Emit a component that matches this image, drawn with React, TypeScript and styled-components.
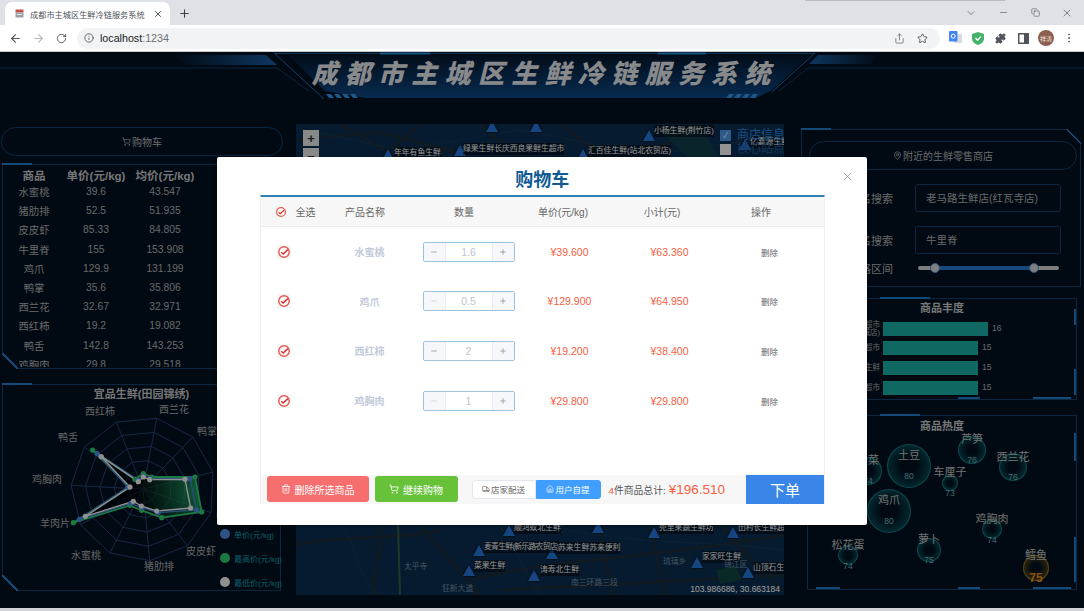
import React from "react";
import styled, { createGlobalStyle } from "styled-components";
import { ArrowLeft, ArrowRight, RotateCw, Info, Share, Star, Puzzle, MoreVertical, ChevronDown, Minus, Copy, X, Plus, Trash2, ShoppingCart, Truck, Home, MapPin } from "lucide-react";

const SANS = `"Liberation Sans", "Noto Sans CJK SC", sans-serif`;
const PAGE = "#02101f";
const LINE = "#0f4068";
const ACCENT = "#1f78c4";

const Global = createGlobalStyle`
  html, body { margin: 0; padding: 0; background: #cfd2d6; }
  body { font-family: ${SANS}; overflow: hidden; }
  * { box-sizing: border-box; }
`;

const Shell = styled.div`
  width: 1084px;
  height: 611px;
  display: flex;
  flex-direction: column;
  overflow: hidden;
`;

/* ---------- browser chrome ---------- */
const TabBar = styled.div`
  height: 25px;
  background: #dee1e6;
  display: flex;
  align-items: flex-end;
  padding-left: 5px;
  color: #45494e;
  position: relative;
`;
const TabShade = styled.div`
  position: absolute;
  top: 0;
  left: 805px;
  width: 200px;
  height: 1px;
  background: #b9bbbe;
`;
const Tab = styled.div`
  width: 165px;
  height: 23px;
  background: #fff;
  border-radius: 7px 7px 0 0;
  display: flex;
  align-items: center;
  padding: 0 7px 0 10px;
  font-size: 8.2px;
  color: #50545a;
`;
const TabTitle = styled.span`
  margin-left: 6px;
  flex: 1;
  white-space: nowrap;
`;
const NewTab = styled.div`
  width: 28px;
  height: 23px;
  margin-left: 0;
  display: flex;
  align-items: center;
  justify-content: center;
  color: #3c4043;
`;
const WindowControls = styled.div`
  margin-left: auto;
  height: 25px;
  display: flex;
  align-items: center;
  padding-right: 1px;
`;
const WindowButton = styled.div`
  width: 32px;
  display: flex;
  justify-content: center;
  color: #45494e;
`;
const Toolbar = styled.div`
  height: 27px;
  background: #fff;
  border-bottom: 1px solid #c8cacd;
  display: flex;
  align-items: center;
  padding-left: 4px;
`;
const NavButton = styled.div<{ $off?: boolean }>`
  width: 23px;
  display: flex;
  justify-content: center;
  color: ${(p) => (p.$off ? "#b4b7bb" : "#50545a")};
`;
const Omnibox = styled.div`
  margin-left: 4px;
  width: 863px;
  height: 21px;
  border-radius: 11px;
  background: #f1f3f4;
  display: flex;
  align-items: center;
  padding: 0 6px 0 7px;
  color: #50545a;
`;
const Url = styled.span`
  margin-left: 6px;
  font-size: 10.7px;
  color: #202124;
  flex: 1;
  span { color: #6b6f74; }
`;
const OmniIcon = styled.div`
  width: 23px;
  display: flex;
  justify-content: center;
`;
const Extensions = styled.div`
  display: flex;
  align-items: center;
  margin-left: 4px;
`;
const ExtSlot = styled.div`
  width: 22.7px;
  display: flex;
  justify-content: center;
  align-items: center;
  color: #50545a;
`;
const Avatar = styled.div`
  width: 16px;
  height: 16px;
  border-radius: 50%;
  background: #8d5f4e;
  color: #f3e8e0;
  font-size: 6px;
  display: flex;
  align-items: center;
  justify-content: center;
  white-space: nowrap;
`;

/* ---------- stage ---------- */
const Stage = styled.div`
  position: relative;
  height: 556px;
  background: ${PAGE};
  flex: none;
`;
const Header = styled.header`
  position: relative;
  height: 72px;
`;
const Banner = styled.svg`
  display: block;
`;
const SystemTitle = styled.h1`
  position: absolute;
  left: 0;
  right: 0;
  top: 4px;
  margin: 0;
  text-align: center;
  font-family: "Noto Sans CJK SC", sans-serif;
  font-size: 26px;
  line-height: 32px;
  font-weight: 900;
  font-style: italic;
  letter-spacing: 7.3px;
  color: #dcdee0;
  padding-left: 5px;
`;
const Columns = styled.div`
  display: grid;
  grid-template-columns: 283px 1fr 283px;
  height: 484px;
`;
const Side = styled.div<{ $top: number }>`
  display: flex;
  flex-direction: column;
  padding-top: ${(p) => p.$top}px;
`;
const Panel = styled.section<{ $h: number; $w: number; $corner?: "bl" | "tr"; $ml?: number; $mt?: number; $pt?: number; $ax?: number; $aw?: number; $foot?: boolean }>`
  position: relative;
  flex: none;
  width: ${(p) => p.$w}px;
  height: ${(p) => p.$h}px;
  margin-left: ${(p) => p.$ml ?? 0}px;
  margin-top: ${(p) => p.$mt ?? 0}px;
  padding-top: ${(p) => p.$pt ?? 0}px;
  border: 1px solid ${LINE};
  color: #bbb;
  ${(p) =>
    p.$foot
      ? `background:
      linear-gradient(90deg, transparent 3%, ${ACCENT} 3%, ${ACCENT} 12%, transparent 12%, transparent 56%, ${ACCENT} 56%, ${ACCENT} 64%, transparent 64%, transparent 84%, ${ACCENT} 84%, ${ACCENT} 98%, transparent 98%) bottom / 100% 2px no-repeat,
      linear-gradient(180deg, transparent 10%, ${ACCENT} 10%, ${ACCENT} 26%, transparent 26%, transparent 70%, ${ACCENT} 70%, ${ACCENT} 96%, transparent 96%) right / 2px 100% no-repeat;`
      : ""}
  &::before {
    content: "";
    position: absolute;
    left: ${(p) => p.$ax ?? -1}px;
    top: -2px;
    width: ${(p) => p.$aw ?? 30}px;
    height: 2px;
    background: ${ACCENT};
  }
  &::after {
    content: "";
    position: absolute;
    width: 16px;
    height: 16px;
    ${(p) =>
      p.$corner === "tr"
        ? `right: -1px; top: -1px; background: linear-gradient(45deg, transparent 50%, ${ACCENT} 50%, ${ACCENT} 58%, ${PAGE} 58%);`
        : p.$corner === "bl"
        ? `left: -1px; bottom: -1px; background: linear-gradient(45deg, ${PAGE} 46%, ${ACCENT} 46%, ${ACCENT} 54%, transparent 54%);`
        : ""}
  }
`;
const Pill = styled.div<{ $w: number; $ml: number }>`
  width: ${(p) => p.$w}px;
  height: 29px;
  margin-left: ${(p) => p.$ml}px;
  flex: none;
  border: 1px solid ${LINE};
  border-radius: 15px;
  display: flex;
  align-items: center;
  justify-content: center;
  gap: 1px;
  font-size: 10px;
  color: #b0b0b0;
`;
const TableClip = styled.div`
  height: 202px;
  overflow: hidden;
`;
const DataRow = styled.div<{ $head?: boolean }>`
  display: grid;
  grid-template-columns: 62px 62px 76px 90px;
  height: ${(p) => (p.$head ? 15 : 19.2)}px;
  align-items: center;
  text-align: center;
  white-space: nowrap;
  font-size: ${(p) => (p.$head ? 11.5 : 10.3)}px;
  font-weight: ${(p) => (p.$head ? 700 : 400)};
  margin-top: ${(p) => (p.$head ? 2 : 0)}px;
  color: ${(p) => (p.$head ? "#c0c0c0" : "#aaa")};
`;
const RadarTitle = styled.div`
  height: 19px;
  line-height: 19px;
  font-size: 11px;
  text-align: center;
  font-weight: 700;
  color: #bdbdbd;
`;
const Legend = styled.ul`
  position: absolute;
  right: 2px;
  bottom: 1px;
  margin: 0;
  padding: 0;
  list-style: none;
  display: flex;
  flex-direction: column;
  gap: 10px;
  width: 58px;
`;
const LegendItem = styled.li`
  display: flex;
  align-items: center;
  gap: 4px;
  height: 14px;
  font-size: 8px;
  color: #149aa6;
  white-space: nowrap;
`;
const LegendDot = styled.i<{ $c: string }>`
  width: 10px;
  height: 10px;
  border-radius: 50%;
  background: ${(p) => p.$c};
  flex: none;
`;

/* ---------- map ---------- */
const MapBox = styled.div`
  position: relative;
  margin: 0 17px 0 13px;
  height: 471px;
  background: #0b2c4c;
  overflow: hidden;
`;
const MapArt = styled.svg`
  display: block;
`;
const ZoomStack = styled.div`
  position: absolute;
  left: 7px;
  top: 6px;
  display: flex;
  flex-direction: column;
  gap: 2px;
`;
const ZoomBtn = styled.div`
  width: 16px;
  height: 16px;
  background: #ddd;
  color: #333;
  font-size: 13px;
  font-weight: 700;
  display: flex;
  align-items: center;
  justify-content: center;
`;
const Pin = styled.div<{ $x: number; $y: number }>`
  position: absolute;
  left: ${(p) => p.$x - 6}px;
  top: ${(p) => p.$y - 6}px;
  width: 0;
  height: 0;
  border-left: 6px solid transparent;
  border-right: 6px solid transparent;
  border-bottom: 11px solid #2272d0;
  filter: drop-shadow(0 0 1px #000);
`;
const MapText = styled.div<{ $x: number; $y: number; $kind?: string }>`
  position: absolute;
  left: ${(p) => p.$x}px;
  top: ${(p) => p.$y - 6}px;
  font-size: 7.8px;
  line-height: 12px;
  white-space: nowrap;
  letter-spacing: ${(p) => (p.$kind === "tight" ? "-0.7px" : "0")};
  color: ${(p) => (p.$kind === "faint" ? "#6f8aa3" : "#eee")};
  background: ${(p) => (p.$kind === "faint" ? "transparent" : "rgba(0,0,0,.45)")};
`;
const LayerSwitch = styled.div<{ $y: number; $on?: boolean }>`
  position: absolute;
  left: 424px;
  top: ${(p) => p.$y}px;
  display: flex;
  align-items: center;
  gap: 6px;
  font-size: 12px;
  line-height: 11px;
  white-space: nowrap;
  color: ${(p) => (p.$on ? "#2a7fd0" : "#1f5c96")};
  i {
    width: 11px;
    height: 11px;
    display: flex;
    align-items: center;
    justify-content: center;
    background: ${(p) => (p.$on ? "#4a90e2" : "#eee")};
    color: #dfe;
    font-size: 8px;
    font-style: normal;
  }
`;
const Coord = styled.div`
  position: absolute;
  right: 4px;
  bottom: 0;
  font-size: 8.5px;
  line-height: 12px;
  color: #fff;
`;

/* ---------- right column ---------- */
const FormRow = styled.div<{ $mt: number }>`
  display: grid;
  grid-template-columns: 84px 146px;
  column-gap: 22px;
  margin: ${(p) => p.$mt}px 0 0 7px;
  align-items: center;
  font-size: 11px;
  color: #aaa;
  text-align: right;
`;
const SearchBox = styled.div`
  height: 28px;
  border: 1px solid ${LINE};
  border-radius: 3px;
  line-height: 26px;
  padding-left: 10px;
  text-align: left;
  white-space: nowrap;
  font-size: 10.5px;
`;
const SliderTrack = styled.div`
  position: relative;
  height: 4px;
  width: 141px;
  margin-left: 3px;
  border-radius: 2px;
  background: #ccc;
`;
const SliderRange = styled.div`
  position: absolute;
  left: 17px;
  right: 25px;
  top: 0;
  bottom: 0;
  background: #2a74c8;
`;
const SliderKnob = styled.i<{ $x: number }>`
  position: absolute;
  left: ${(p) => p.$x - 5}px;
  top: -3px;
  width: 10px;
  height: 10px;
  border-radius: 50%;
  background: #ccc;
  border: 1px solid #4a87cc;
`;
const PanelHeading = styled.div<{ $h: number; $mb?: number }>`
  height: ${(p) => p.$h}px;
  line-height: ${(p) => p.$h}px;
  margin-bottom: ${(p) => p.$mb ?? 0}px;
  font-size: 11px;
  font-weight: 700;
  text-align: center;
  color: #c0c0c0;
`;
const BarRows = styled.div`
  display: flex;
  flex-direction: column;
  gap: 6px;
`;
const BarRow = styled.div`
  display: grid;
  grid-template-columns: 72px auto;
  column-gap: 3px;
  align-items: center;
  justify-content: start;
  height: 14px;
`;
const BarLabel = styled.div`
  font-size: 7.5px;
  line-height: 8px;
  text-align: right;
  color: #a5a5a5;
  white-space: pre-line;
`;
const Bar = styled.div<{ $w: number }>`
  width: ${(p) => p.$w}px;
  height: 14px;
  background: #1ba89e;
  position: relative;
  &::after {
    content: attr(data-v);
    position: absolute;
    left: calc(100% + 4px);
    top: 1px;
    font-size: 8.5px;
    color: #aaa;
  }
`;
const BubbleCanvas = styled.div`
  position: relative;
  height: 153px;
`;
const Bubble = styled.div<{ $x: number; $y: number; $r: number; $gold?: boolean }>`
  position: absolute;
  left: ${(p) => p.$x - p.$r}px;
  top: ${(p) => p.$y - p.$r}px;
  width: ${(p) => p.$r * 2}px;
  height: ${(p) => p.$r * 2}px;
  border-radius: 50%;
  background: radial-gradient(circle, transparent 25%, ${(p) => (p.$gold ? "rgba(200,140,20,.55)" : "rgba(20,170,170,.5)")} 100%);
  border: 1px solid ${(p) => (p.$gold ? "rgba(220,160,30,.5)" : "rgba(30,190,190,.45)")};
`;
const BubbleName = styled.div<{ $x: number; $y: number }>`
  position: absolute;
  left: ${(p) => p.$x}px;
  top: ${(p) => p.$y - 7}px;
  transform: translateX(-50%);
  font-size: 11px;
  line-height: 14px;
  color: #b8b8b8;
  white-space: nowrap;
`;
const BubbleValue = styled.div<{ $x: number; $y: number; $gold?: boolean }>`
  position: absolute;
  left: ${(p) => p.$x}px;
  top: ${(p) => p.$y - 6}px;
  transform: translateX(-50%);
  font-size: ${(p) => (p.$gold ? 12 : 8.5)}px;
  font-weight: ${(p) => (p.$gold ? 700 : 400)};
  line-height: 12px;
  color: ${(p) => (p.$gold ? "#e08a10" : "#6fb0b8")};
`;

/* ---------- modal ---------- */
const Mask = styled.div`
  position: absolute;
  inset: 0;
  background: rgba(0, 0, 0, 0.38);
`;
const Modal = styled.div`
  position: absolute;
  left: 217px;
  top: 105px;
  width: 650px;
  height: 368px;
  background: #fff;
  border-radius: 2px;
  box-shadow: 0 1px 3px rgba(0, 0, 0, 0.3);
  padding: 0 42px 21px 42.5px;
  display: flex;
  flex-direction: column;
`;
const ModalTitle = styled.h2`
  margin: 0;
  height: 38px;
  line-height: 46px;
  font-size: 18px;
  font-weight: 700;
  color: #0f5a94;
  text-align: center;
`;
const CloseBtn = styled.div`
  position: absolute;
  right: 13px;
  top: 13px;
  color: #8f959c;
  display: flex;
`;
const Cart = styled.div`
  flex: 1;
  display: flex;
  flex-direction: column;
  border-top: 2px solid #3080b8;
  border-left: 1px solid #eee;
  border-right: 1px solid #eee;
`;
const CartHead = styled.div`
  height: 30px;
  flex: none;
  background: #f7f7f7;
  border-bottom: 1px solid #ececec;
  display: grid;
  grid-template-columns: 55px repeat(5, 99px);
  align-items: center;
  text-align: center;
  font-size: 10px;
  color: #666;
`;
const SelectAll = styled.div`
  display: flex;
  align-items: center;
  padding-left: 14px;
  gap: 9px;
  white-space: nowrap;
`;
const CartRows = styled.div`
  flex: 1;
`;
const CartRow = styled.div`
  height: 49.6px;
  display: grid;
  grid-template-columns: 59px repeat(5, 100px);
  align-items: center;
  text-align: center;
  font-size: 10px;
`;
const RowCheck = styled.div`
  padding-left: 16px;
  display: flex;
`;
const ItemName = styled.div`
  font-weight: 700;
  color: #c2cada;
`;
const Stepper = styled.div`
  width: 92px;
  height: 20px;
  margin-left: 3px;
  border: 1px solid #9cc4de;
  border-radius: 2px;
  display: grid;
  grid-template-columns: 21px 1fr 21px;
  font-size: 10.5px;
  color: #c0c4cc;
`;
const StepBtn = styled.div<{ $off?: boolean }>`
  background: #f5f7fa;
  display: flex;
  align-items: center;
  justify-content: center;
  color: ${(p) => (p.$off ? "#c8ccd2" : "#7f858e")};
`;
const StepValue = styled.div`
  line-height: 18px;
  border-left: 1px solid #e8ebef;
  border-right: 1px solid #e8ebef;
`;
const Money = styled.div`
  color: #f8603f;
  font-size: 10.5px;
`;
const RemoveLink = styled.div`
  font-size: 8.5px;
  color: #666;
`;
const CartFoot = styled.div`
  height: 29.5px;
  flex: none;
  background: #f7f7f7;
  display: flex;
  align-items: center;
  padding-left: 6px;
`;
const FootBtn = styled.div<{ $bg: string; $w: number; $ml?: number }>`
  width: ${(p) => p.$w}px;
  height: 26px;
  margin-left: ${(p) => p.$ml ?? 0}px;
  border-radius: 3px;
  background: ${(p) => p.$bg};
  color: #fff;
  font-size: 10px;
  display: flex;
  align-items: center;
  justify-content: center;
  gap: 4px;
`;
const DeliveryGroup = styled.div`
  display: flex;
  margin-left: 14px;
  height: 19px;
  font-size: 8.5px;
`;
const DeliveryOpt = styled.div<{ $on?: boolean }>`
  width: ${(p) => (p.$on ? 65 : 64)}px;
  display: flex;
  align-items: center;
  justify-content: center;
  gap: 1px;
  background: ${(p) => (p.$on ? "#409eff" : "#fff")};
  color: ${(p) => (p.$on ? "#fff" : "#666")};
  border: 1px solid ${(p) => (p.$on ? "#409eff" : "#e4e7ed")};
  border-radius: ${(p) => (p.$on ? "0 3px 3px 0" : "3px 0 0 3px")};
`;
const Total = styled.div`
  margin-left: 8px;
  font-size: 9.8px;
  color: #555;
  display: flex;
  align-items: baseline;
  white-space: nowrap;
  b { color: #f8603f; font-weight: 400; }
`;
const TotalAmount = styled.span`
  margin-left: 3px;
  font-size: 13.5px;
  color: #f8603f;
`;
const OrderBtn = styled.div`
  margin-left: auto;
  width: 78px;
  height: 29.5px;
  background: #3a86e8;
  color: #fff;
  font-size: 15px;
  display: flex;
  align-items: center;
  justify-content: center;
`;

/* ---------- data ---------- */
const tableRows = [
  ["水蜜桃", "39.6", "43.547"],
  ["猪肋排", "52.5", "51.935"],
  ["皮皮虾", "85.33", "84.805"],
  ["牛里脊", "155", "153.908"],
  ["鸡爪", "129.9", "131.199"],
  ["鸭掌", "35.6", "35.806"],
  ["西兰花", "32.67", "32.971"],
  ["西红柿", "19.2", "19.082"],
  ["鸭舌", "142.8", "143.253"],
  ["鸡胸肉", "29.8", "29.518"],
];

const cartRows = [
  { name: "水蜜桃", qty: "1.6", price: "39.600", sub: "63.360", off: false },
  { name: "鸡爪", qty: "0.5", price: "129.900", sub: "64.950", off: true },
  { name: "西红柿", qty: "2", price: "19.200", sub: "38.400", off: false },
  { name: "鸡胸肉", qty: "1", price: "29.800", sub: "29.800", off: true },
];

const X0 = 296;
const Y0 = 124;
const pins = [
  [388, 155], [460, 151], [492, 127], [536, 127], [649, 136], [583, 155], [745, 145],
  [509, 531], [479, 551], [469, 571], [534, 576], [598, 528], [654, 533], [733, 533],
  [552, 554], [697, 563], [748, 573],
];
const mapLabels: [string, number, number, string?][] = [
  ["年年有鱼生鲜", 394, 153],
  ["绿果生鲜长庆西良果鲜生超市", 463, 149],
  ["汇百佳生鲜(站北农贸店)", 588, 151],
  ["小杨生鲜(荆竹店)", 654, 131],
  ["亿嘉源生鲜", 750, 142],
  ["顺鸿蚁北生鲜", 514, 528],
  ["麦青生鲜(新乐路农贸店)", 484, 547, "tight"],
  ["菜果生鲜", 474, 566],
  ["涛寿北生鲜", 540, 570],
  ["兜里果蔬生鲜坊", 659, 528],
  ["田村长生鲜超市", 738, 528],
  ["苏来生鲜苏来便利", 558, 548],
  ["家家旺生鲜", 702, 557],
  ["山顶石生鲜", 753, 568],
  ["太平寺", 404, 567, "faint"],
  ["琉璃乡", 663, 562, "faint"],
  ["锦江区", 724, 565, "faint"],
  ["南三环路三段", 571, 583, "faint"],
  ["狂新大道", 442, 589, "faint"],
];

const bars = [
  ["永辉超市\n(锦城店)", 105, 16],
  ["红旗超市", 95, 15],
  ["田园生鲜", 95, 15],
  ["家乐超市", 95, 15],
] as const;

const BX = 808;
const BY = 415;
const bubbles = [
  { n: "土豆", v: 80, x: 909, y: 466, r: 22, ny: 455, vy: 476 },
  { n: "芦笋", v: 76, x: 972, y: 450, r: 14, ny: 439, vy: 460 },
  { n: "西兰花", v: 76, x: 1013, y: 467, r: 14, ny: 457, vy: 477 },
  { n: "车厘子", v: 73, x: 950, y: 483, r: 8, ny: 472, vy: 493 },
  { n: "鸡爪", v: 80, x: 889, y: 511, r: 22, ny: 500, vy: 521 },
  { n: "鸡胸肉", v: 74, x: 992, y: 529, r: 10, ny: 519, vy: 540 },
  { n: "萝卜", v: 75, x: 929, y: 550, r: 12, ny: 539, vy: 560 },
  { n: "鳕鱼", v: 75, x: 1036, y: 568, r: 13, ny: 555, vy: 578, gold: true },
  { n: "松花蛋", v: 74, x: 848, y: 545 + 10, r: 10, ny: 545, vy: 566 },
  { n: "白菜", v: 74, x: 868, y: 471, r: 14, ny: 460, vy: 481 },
];

const radarLabels: [string, number, number][] = [
  ["西红柿", 100, 414], ["西兰花", 174, 412], ["鸭舌", 68, 440], ["鸭掌", 207, 434],
  ["鸡胸肉", 47, 482], ["羊肉片", 55, 526], ["水蜜桃", 86, 558], ["猪肋排", 159, 569],
  ["皮皮虾", 201, 554], ["牛里脊", 231, 518],
];
const zoomPts = (s: number[][]) => s.map(([x, y]) => [x / 3, 375 + y / 3]);
const greenPts = zoomPts([[278,222],[388,333],[220,440],[390,388],[425,403],[485,425],[605,408],[585,303],[455,303],[430,293],[405,310]]);
const bluePts = zoomPts([[292,233],[383,333],[238,430],[392,382],[425,395],[475,410],[590,402],[570,308],[450,308],[430,300],[415,312]]);
const greyPts = zoomPts([[304,242],[390,333],[256,421],[400,376],[424,390],[470,405],[572,396],[555,310],[449,311],[430,303],[415,317]]);
const str = (p: number[][]) => p.map((q) => q.join(",")).join(" ");
const RCX = 143;
const RCY = 488;
const gon = (r: number) =>
  Array.from({ length: 11 }, (_, i) => {
    const a = ((11 + (i * 360) / 11 - 90) * Math.PI) / 180;
    return [RCX + r * Math.cos(a), RCY + r * Math.sin(a)];
  });

/* ---------- small drawings ---------- */
const CheckMark = () => (
  <svg width="14" height="14" viewBox="0 0 14 14">
    <rect width="14" height="14" fill="#f6f6f6" />
    <circle cx="7" cy="7" r="5.2" fill="#fff" stroke="#e5574f" strokeWidth="1.4" />
    <path d="M4.2 7.2 L6.2 9 L10.8 4.6" fill="none" stroke="#d8342c" strokeWidth="1.5" />
  </svg>
);
const Favicon = () => (
  <svg width="9" height="9" viewBox="0 0 9 9">
    <rect x="0.5" y="0.5" width="8" height="3" fill="#c8504a" />
    <rect x="0.5" y="3.5" width="8" height="5" fill="#9aa0a8" />
    <rect x="2" y="5" width="5" height="1" fill="#e8e8e8" />
  </svg>
);
const Translate = () => (
  <svg width="13" height="14" viewBox="0 0 13 14">
    <rect x="5" y="3" width="8" height="9" fill="#d7dbe0" />
    <rect x="0" y="0" width="8.5" height="10.5" rx="1" fill="#4285f4" />
    <circle cx="4.2" cy="5.2" r="2" fill="none" stroke="#fff" strokeWidth="1" />
  </svg>
);
const Shield = () => (
  <svg width="12" height="13" viewBox="0 0 12 13">
    <path d="M6 0 L12 2 V6.5 C12 10 9 12 6 13 C3 12 0 10 0 6.5 V2 Z" fill="#45b36b" />
    <path d="M3.5 6 L5.5 8.2 L8.8 4.6" fill="none" stroke="#fff" strokeWidth="1.4" />
  </svg>
);
const SidePanelIcon = () => (
  <svg width="11" height="11" viewBox="0 0 11 11">
    <rect x="0.75" y="0.75" width="9.5" height="9.5" fill="none" stroke="#50545a" strokeWidth="1.5" />
    <rect x="6" y="1" width="4" height="9" fill="#50545a" />
  </svg>
);

const BannerArt = () => (
  <Banner width="1084" height="72" viewBox="0 52 1084 72">
    <defs>
      <linearGradient id="bf" x1="0" y1="0" x2="0" y2="1">
        <stop offset="0" stopColor="#04162a" />
        <stop offset="1" stopColor="#0d4582" />
      </linearGradient>
      <linearGradient id="lw" x1="0" y1="0" x2="1" y2="0">
        <stop offset="0" stopColor="#02101f" />
        <stop offset="1" stopColor="#185a9c" />
      </linearGradient>
      <linearGradient id="rw" x1="0" y1="0" x2="1" y2="0">
        <stop offset="0" stopColor="#185a9c" />
        <stop offset="1" stopColor="#02101f" />
      </linearGradient>
    </defs>
    <polygon points="288,55 810,55 772,90 756,98 366,98 325,91" fill="url(#bf)" />
    <polygon points="173,55 266,55 277,65 186,65" fill="url(#lw)" />
    <polygon points="818,55 880,55 872,64 809,64" fill="url(#rw)" />
    <polyline points="0,68 152,68 277,68 309,91" fill="none" stroke="#0e3d66" />
    <polyline points="1084,68 808,68 779,91" fill="none" stroke="#0e3d66" />
    <polyline points="274,53 324,99" fill="none" stroke="#1c6bb0" />
    <polyline points="815,53 772,92" fill="none" stroke="#1c6bb0" />
    <line x1="274" y1="53.5" x2="815" y2="53.5" stroke="#165896" />
    <line x1="380" y1="53.5" x2="430" y2="53.5" stroke="#2388d6" strokeWidth="2" />
    <line x1="658" y1="53.5" x2="706" y2="53.5" stroke="#2388d6" strokeWidth="2" />
    {[326, 334, 342, 350].map((x) => (
      <polygon key={x} points={`${x},94 ${x + 5},94 ${x + 8},98 ${x + 3},98`} fill="#2f8ede" />
    ))}
    {[726, 734, 742, 750].map((x) => (
      <polygon key={x} points={`${x + 3},94 ${x + 8},94 ${x + 5},98 ${x},98`} fill="#2f8ede" />
    ))}
  </Banner>
);

const MapRoads = () => (
  <MapArt width="488" height="471" viewBox="296 124 488 471">
    <g fill="none" stroke="#1a2a38" strokeWidth="3">
      <path d="M296 140 L380 132 L470 156" />
      <path d="M340 124 L402 160" />
      <path d="M420 124 L380 160" />
      <path d="M480 124 L520 160" />
      <path d="M560 124 L610 160" />
      <path d="M640 160 L700 124" />
      <path d="M296 545 C340 535 400 540 440 530" />
      <path d="M380 525 C385 550 370 570 375 595" />
      <path d="M420 525 L480 595" />
      <path d="M500 590 L600 585 L784 575" />
      <path d="M470 580 C540 560 640 560 784 535" />
      <path d="M600 525 L612 595" />
      <path d="M650 525 L665 595" />
      <path d="M720 525 L780 590" />
    </g>
    <g fill="none" stroke="#13374f" strokeWidth="1">
      <path d="M296 128 L400 150 L520 130 L650 155 L784 135" />
      <path d="M340 525 C360 545 350 570 380 595" />
      <path d="M500 525 L540 595" />
      <path d="M570 530 C640 545 700 540 784 550" />
    </g>
    <path d="M660 130 L700 124 L720 160 L690 160 Z" fill="#0f3a46" />
    <path d="M716 570 l20 -4 l6 14 l-22 4 Z" fill="#10433f" />
    <path d="M398 525 L400 595" stroke="#2f5d3d" strokeWidth="2" fill="none" />
  </MapArt>
);

const RadarChart = () => (
  <svg width="277" height="186" viewBox="3 403 277 186" style={{ display: "block" }}>
    <defs>
      <radialGradient id="rg" gradientUnits="userSpaceOnUse" cx="200" cy="490" r="62">
        <stop offset="0" stopColor="#2ad27a" stopOpacity=".7" />
        <stop offset="1" stopColor="#000" stopOpacity=".6" />
      </radialGradient>
    </defs>
    {[72, 57.6, 43.2, 28.8, 14.4].map((r) => (
      <polygon key={r} points={str(gon(r))} fill="none" stroke="#27406e" strokeWidth="1" />
    ))}
    {gon(72).map(([x, y], i) => (
      <line key={i} x1={RCX} y1={RCY} x2={x} y2={y} stroke="#27406e" />
    ))}
    <polygon points={str(greenPts)} fill="url(#rg)" stroke="#2ec46a" strokeWidth="1.8" />
    <polygon points={str(bluePts)} fill="none" stroke="#3f7ed0" strokeWidth="1.3" />
    <polygon points={str(greyPts)} fill="none" stroke="#e6e6e6" strokeWidth="1.4" />
    {greenPts.map(([x, y], i) => <circle key={i} cx={x} cy={y} r="2.6" fill="#2ec46a" />)}
    {bluePts.map(([x, y], i) => <circle key={i} cx={x} cy={y} r="2.6" fill="#4a86d8" />)}
    {greyPts.map(([x, y], i) => <circle key={i} cx={x} cy={y} r="2.6" fill="#e8e8e8" />)}
    {radarLabels.map(([t, x, y]) => (
      <text key={t} x={x} y={y} textAnchor="middle" fontSize="10" fill="#a4a4a4">{t}</text>
    ))}
  </svg>
);

export default function App() {
  return (
    <Shell>
      <Global />
      <TabBar>
        <TabShade />
        <Tab>
          <Favicon />
          <TabTitle>成都市主城区生鲜冷链服务系统</TabTitle>
          <X size={10} strokeWidth={2.4} />
        </Tab>
        <NewTab><Plus size={13} strokeWidth={2} /></NewTab>
        <WindowControls>
          <WindowButton><ChevronDown size={12} strokeWidth={1.2} /></WindowButton>
          <WindowButton><Minus size={11} strokeWidth={1.2} /></WindowButton>
          <WindowButton><Copy size={9} strokeWidth={1.4} /></WindowButton>
          <WindowButton><X size={12} strokeWidth={1.2} /></WindowButton>
        </WindowControls>
      </TabBar>
      <Toolbar>
        <NavButton><ArrowLeft size={13} /></NavButton>
        <NavButton $off><ArrowRight size={13} /></NavButton>
        <NavButton><RotateCw size={11} /></NavButton>
        <Omnibox>
          <Info size={10} />
          <Url>localhost<span>:1234</span></Url>
          <OmniIcon><Share size={11} color="#7b7f84" /></OmniIcon>
          <OmniIcon><Star size={11} /></OmniIcon>
        </Omnibox>
        <Extensions>
          <ExtSlot><Translate /></ExtSlot>
          <ExtSlot><Shield /></ExtSlot>
          <ExtSlot><Puzzle size={11} fill="#50545a" /></ExtSlot>
          <ExtSlot><SidePanelIcon /></ExtSlot>
          <ExtSlot><Avatar>祥涛</Avatar></ExtSlot>
          <ExtSlot><MoreVertical size={12} /></ExtSlot>
        </Extensions>
      </Toolbar>

      <Stage>
        <Header>
          <BannerArt />
          <SystemTitle>成都市主城区生鲜冷链服务系统</SystemTitle>
        </Header>
        <Columns>
          <Side $top={3}>
            <Pill $w={282} $ml={1}><ShoppingCart size={9} />购物车</Pill>
            <Panel $w={281} $h={205} $ml={2} $mt={8} $corner="bl">
              <TableClip>
                <DataRow $head>
                  <span>商品</span><span>单价(元/kg)</span><span>均价(元/kg)</span><span>加入时间</span>
                </DataRow>
                {tableRows.map((r) => (
                  <DataRow key={r[0]}>
                    <span>{r[0]}</span><span>{r[1]}</span><span>{r[2]}</span><span />
                  </DataRow>
                ))}
              </TableClip>
            </Panel>
            <Panel $w={279} $h={207} $ml={2} $mt={15} $corner="bl">
              <RadarTitle>宜品生鲜(田园锦绣)</RadarTitle>
              <RadarChart />
              <Legend>
                <LegendItem><LegendDot $c="#4a86d8" />单价(元/kg)</LegendItem>
                <LegendItem><LegendDot $c="#2ec46a" />最高价(元/kg)</LegendItem>
                <LegendItem><LegendDot $c="#e8e8e8" />最低价(元/kg)</LegendItem>
              </Legend>
            </Panel>
          </Side>

          <MapBox>
            <MapRoads />
            {pins.map(([x, y]) => <Pin key={`${x}-${y}`} $x={x - X0} $y={y - Y0} />)}
            {mapLabels.map(([t, x, y, k]) => (
              <MapText key={t} $x={x - X0} $y={y - Y0} $kind={k}>{t}</MapText>
            ))}
            <ZoomStack>
              <ZoomBtn>+</ZoomBtn>
              <ZoomBtn>−</ZoomBtn>
            </ZoomStack>
            <LayerSwitch $y={6} $on><i>✓</i>商店信息</LayerSwitch>
            <LayerSwitch $y={20}><i />核心站点</LayerSwitch>
            <Coord>103.986686, 30.663184</Coord>
          </MapBox>

          <Side $top={5}>
            <Panel $w={280} $h={158} $pt={11} $corner="tr">
              <Pill $w={268} $ml={7}><MapPin size={9} />附近的生鲜零售商店</Pill>
              <FormRow $mt={14}><span>店名搜索</span><SearchBox>老马路生鲜店(红瓦寺店)</SearchBox></FormRow>
              <FormRow $mt={14}><span>商品名搜索</span><SearchBox>牛里脊</SearchBox></FormRow>
              <FormRow $mt={6}>
                <span>价格区间</span>
                <SliderTrack>
                  <SliderRange />
                  <SliderKnob $x={17} />
                  <SliderKnob $x={116} />
                </SliderTrack>
              </FormRow>
            </Panel>
            <Panel $w={270} $h={102} $ml={6} $mt={11} $ax={72} $aw={50} $foot>
              <PanelHeading $h={18} $mb={4}>商品丰度</PanelHeading>
              <BarRows>
                {bars.map(([l, w, v]) => (
                  <BarRow key={l}>
                    <BarLabel>{l}</BarLabel>
                    <Bar $w={w} data-v={v} />
                  </BarRow>
                ))}
              </BarRows>
            </Panel>
            <Panel $w={270} $h={175} $ml={6} $mt={15} $ax={72} $aw={40} $foot>
              <PanelHeading $h={20}>商品热度</PanelHeading>
              <BubbleCanvas>
                {bubbles.map((b) => (
                  <React.Fragment key={b.n}>
                    <Bubble $x={b.x - BX} $y={b.y - BY - 21} $r={b.r} $gold={b.gold} />
                    <BubbleName $x={b.x - BX} $y={b.ny - BY - 21}>{b.n}</BubbleName>
                    <BubbleValue $x={b.x - BX} $y={b.vy - BY - 21} $gold={b.gold}>{b.v}</BubbleValue>
                  </React.Fragment>
                ))}
              </BubbleCanvas>
            </Panel>
          </Side>
        </Columns>

        <Mask />
        <Modal>
          <ModalTitle>购物车</ModalTitle>
          <CloseBtn><X size={13} strokeWidth={1.4} /></CloseBtn>
          <Cart>
            <CartHead>
              <SelectAll><CheckMark />全选</SelectAll>
              <span>产品名称</span>
              <span>数量</span>
              <span>单价(元/kg)</span>
              <span>小计(元)</span>
              <span>操作</span>
            </CartHead>
            <CartRows>
              {cartRows.map((r) => (
                <CartRow key={r.name}>
                  <RowCheck><CheckMark /></RowCheck>
                  <ItemName>{r.name}</ItemName>
                  <Stepper>
                    <StepBtn $off={r.off}><Minus size={8} /></StepBtn>
                    <StepValue>{r.qty}</StepValue>
                    <StepBtn><Plus size={8} /></StepBtn>
                  </Stepper>
                  <Money>¥{r.price}</Money>
                  <Money>¥{r.sub}</Money>
                  <RemoveLink>删除</RemoveLink>
                </CartRow>
              ))}
            </CartRows>
            <CartFoot>
              <FootBtn $bg="#f76e6e" $w={102}><Trash2 size={10} />删除所选商品</FootBtn>
              <FootBtn $bg="#67c23a" $w={83} $ml={6}><ShoppingCart size={10} />继续购物</FootBtn>
              <DeliveryGroup>
                <DeliveryOpt><Truck size={8} />店家配送</DeliveryOpt>
                <DeliveryOpt $on><Home size={8} />用户自提</DeliveryOpt>
              </DeliveryGroup>
              <Total><b>4</b>件商品总计:<TotalAmount>¥196.510</TotalAmount></Total>
              <OrderBtn>下单</OrderBtn>
            </CartFoot>
          </Cart>
        </Modal>
      </Stage>
    </Shell>
  );
}
